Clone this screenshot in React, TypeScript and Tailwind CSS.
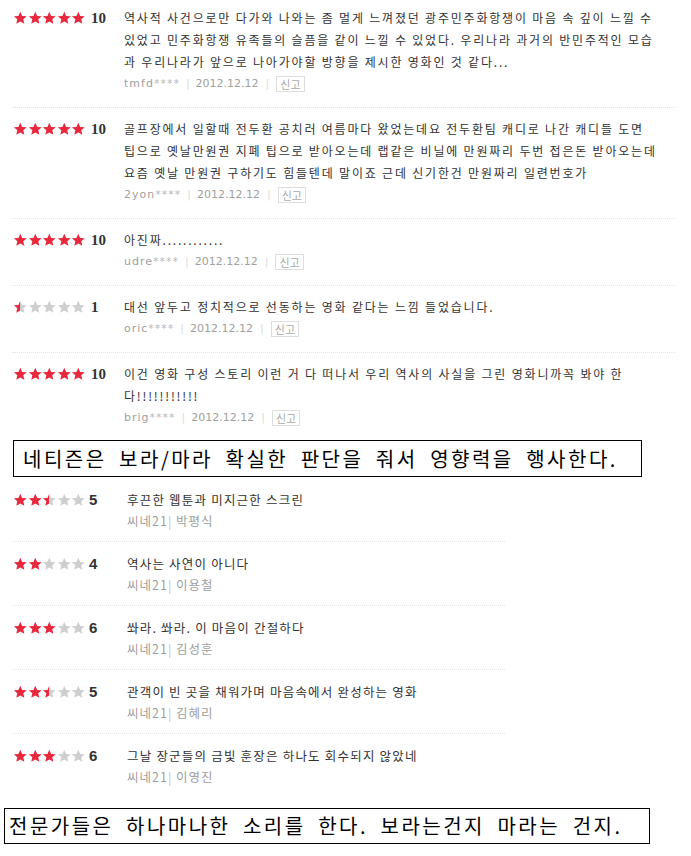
import React from "react";

const KR = '"Noto Sans CJK KR", "Noto Sans", sans-serif';

function Star({ fill }: { fill: number }) {
  const id = React.useId();
  return (
    <svg viewBox="0 0 24 24" className="w-[14.6px] h-[14px] shrink-0">
      <defs>
        <linearGradient id={id} x1="0" x2="1" y1="0" y2="0">
          <stop offset={fill} stopColor="#e8283c" />
          <stop offset={fill} stopColor="#cfcfcf" />
        </linearGradient>
      </defs>
      <polygon
        points="12,1.2 15.2,8.4 23,9.1 17.1,14.3 18.9,22 12,18 5.1,22 6.9,14.3 1,9.1 8.8,8.4"
        fill={`url(#${id})`}
      />
    </svg>
  );
}

function Stars({ value }: { value: number }) {
  return (
    <div className="flex">
      {[0, 1, 2, 3, 4].map((i) => {
        const f = Math.max(0, Math.min(1, value - i));
        return <Star key={i} fill={f} />;
      })}
    </div>
  );
}

const top = [
  {
    stars: 5,
    score: "10",
    lines: [
      "역사적 사건으로만 다가와 나와는 좀 멀게 느껴졌던 광주민주화항쟁이 마음 속 깊이 느낄 수",
      "있었고 민주화항쟁 유족들의 슬픔을 같이 느낄 수 있었다. 우리나라 과거의 반민주적인 모습",
      "과 우리나라가 앞으로 나아가야할 방향을 제시한 영화인 것 같다...",
    ],
    user: "tmfd",
  },
  {
    stars: 5,
    score: "10",
    lines: [
      "골프장에서 일할때 전두환 공치러 여름마다 왔었는데요 전두환팀 캐디로 나간 캐디들 도면",
      "팁으로 옛날만원권 지폐 팁으로 받아오는데 랩같은 비닐에 만원짜리 두번 접은돈 받아오는데",
      "요즘 옛날 만원권 구하기도 힘들텐데 말이죠 근데 신기한건 만원짜리 일련번호가",
    ],
    user: "2yon",
  },
  { stars: 5, score: "10", lines: ["아진짜............"], user: "udre" },
  {
    stars: 0.5,
    score: "1",
    lines: ["대선 앞두고 정치적으로 선동하는 영화 같다는 느낌 들었습니다."],
    user: "oric",
  },
  {
    stars: 5,
    score: "10",
    lines: [
      "이건 영화 구성 스토리 이런 거 다 떠나서 우리 역사의 사실을 그린 영화니까꼭 봐야 한",
      "다!!!!!!!!!!!",
    ],
    user: "brig",
  },
];

const critics = [
  { stars: 2.5, score: "5", text: "후끈한 웹툰과 미지근한 스크린", name: "박평식" },
  { stars: 2, score: "4", text: "역사는 사연이 아니다", name: "이용철" },
  { stars: 3, score: "6", text: "쏴라. 쏴라. 이 마음이 간절하다", name: "김성훈" },
  { stars: 2.5, score: "5", text: "관객이 빈 곳을 채워가며 마음속에서 완성하는 영화", name: "김혜리" },
  { stars: 3, score: "6", text: "그날 장군들의 금빛 훈장은 하나도 회수되지 않았네", name: "이영진" },
];

export default function App() {
  return (
    <div className="w-[691px] h-[856px] bg-white overflow-hidden" style={{ fontFamily: KR }}>
      {/* Netizen reviews */}
      <div className="ml-[12px] w-[664px]">
        {top.map((r, idx) => {
          const first = idx === 0;
          const last = idx === top.length - 1;
          return (
            <div
              key={idx}
              className={`flex ${first ? "pt-[7px]" : "pt-[10px]"} ${last ? "pb-[11px]" : "pb-[12px] border-b border-dotted border-[#e2e2e2]"}`}
            >
              <div className="w-[112px] shrink-0 flex items-center h-[22px] pl-[1px]">
                <Stars value={r.stars} />
                <span
                  className="ml-[5px] text-[15px] font-bold text-[#333] leading-none"
                  style={{ fontFamily: '"Liberation Serif", serif' }}
                >
                  {r.score}
                </span>
              </div>
              <div className="flex flex-col">
                {r.lines.map((l, i) => (
                  <div
                    key={i}
                    className="h-[22px] leading-[22px] text-[12px] tracking-[1.8px] text-[#333] whitespace-nowrap"
                  >
                    {l}
                  </div>
                ))}
                <div
                  className="h-[22px] flex items-center text-[11px] text-[#a0a0a0]"
                  style={{ fontFamily: '"DejaVu Sans", sans-serif' }}
                >
                  <span className="tracking-[1px]">
                    {r.user}
                    <span className="text-[#b8b8b8]">****</span>
                  </span>
                  <span className="mx-[6px] text-[#dcdcdc]">|</span>
                  <span>2012.12.12</span>
                  <span className="mx-[7px] text-[#dcdcdc]">|</span>
                  <span
                    className="border border-[#dedede] px-[3px] h-[16px] leading-[14px] text-[11px] text-[#aaa]"
                    style={{ fontFamily: KR }}
                  >
                    신고
                  </span>
                </div>
              </div>
            </div>
          );
        })}
      </div>

      {/* Box 1 */}
      <div className="ml-[13px] w-[629px] h-[37px] border border-black flex items-center pl-[9px]">
        <span className="text-[20px] tracking-[2.5px] [word-spacing:5.5px] text-black whitespace-nowrap leading-none">
          네티즌은 보라/마라 확실한 판단을 줘서 영향력을 행사한다.
        </span>
      </div>

      {/* Critic reviews */}
      <div className="ml-[12px] w-[493px] mt-[1px]">
        {critics.map((c, idx) => (
          <div
            key={idx}
            className={`flex pt-[11px] pb-[10px] ${idx === critics.length - 1 ? "" : "border-b border-dotted border-[#e2e2e2]"}`}
          >
            <div className="w-[115px] shrink-0 flex items-center h-[21px] pl-[1px]">
              <Stars value={c.stars} />
              <span
                className="ml-[3px] text-[15px] font-bold text-[#333] leading-none"
                style={{ fontFamily: '"Liberation Sans", sans-serif' }}
              >
                {c.score}
              </span>
            </div>
            <div className="flex flex-col">
              <div className="h-[21px] leading-[21px] text-[12.5px] tracking-[1.2px] text-[#333] whitespace-nowrap">
                {c.text}
              </div>
              <div className="h-[21px] leading-[21px] text-[12.5px] tracking-[1px] text-[#a0a0a0] whitespace-nowrap">
                씨네21<span className="text-[#c0c0c0]">|</span> {c.name}
              </div>
            </div>
          </div>
        ))}
      </div>

      {/* Box 2 */}
      <div className="ml-[4px] mt-[11px] w-[646px] h-[36px] border border-black flex items-center pl-[4px]">
        <span className="text-[20px] tracking-[2.5px] [word-spacing:5.5px] text-black whitespace-nowrap leading-none">
          전문가들은 하나마나한 소리를 한다. 보라는건지 마라는 건지.
        </span>
      </div>
    </div>
  );
}
